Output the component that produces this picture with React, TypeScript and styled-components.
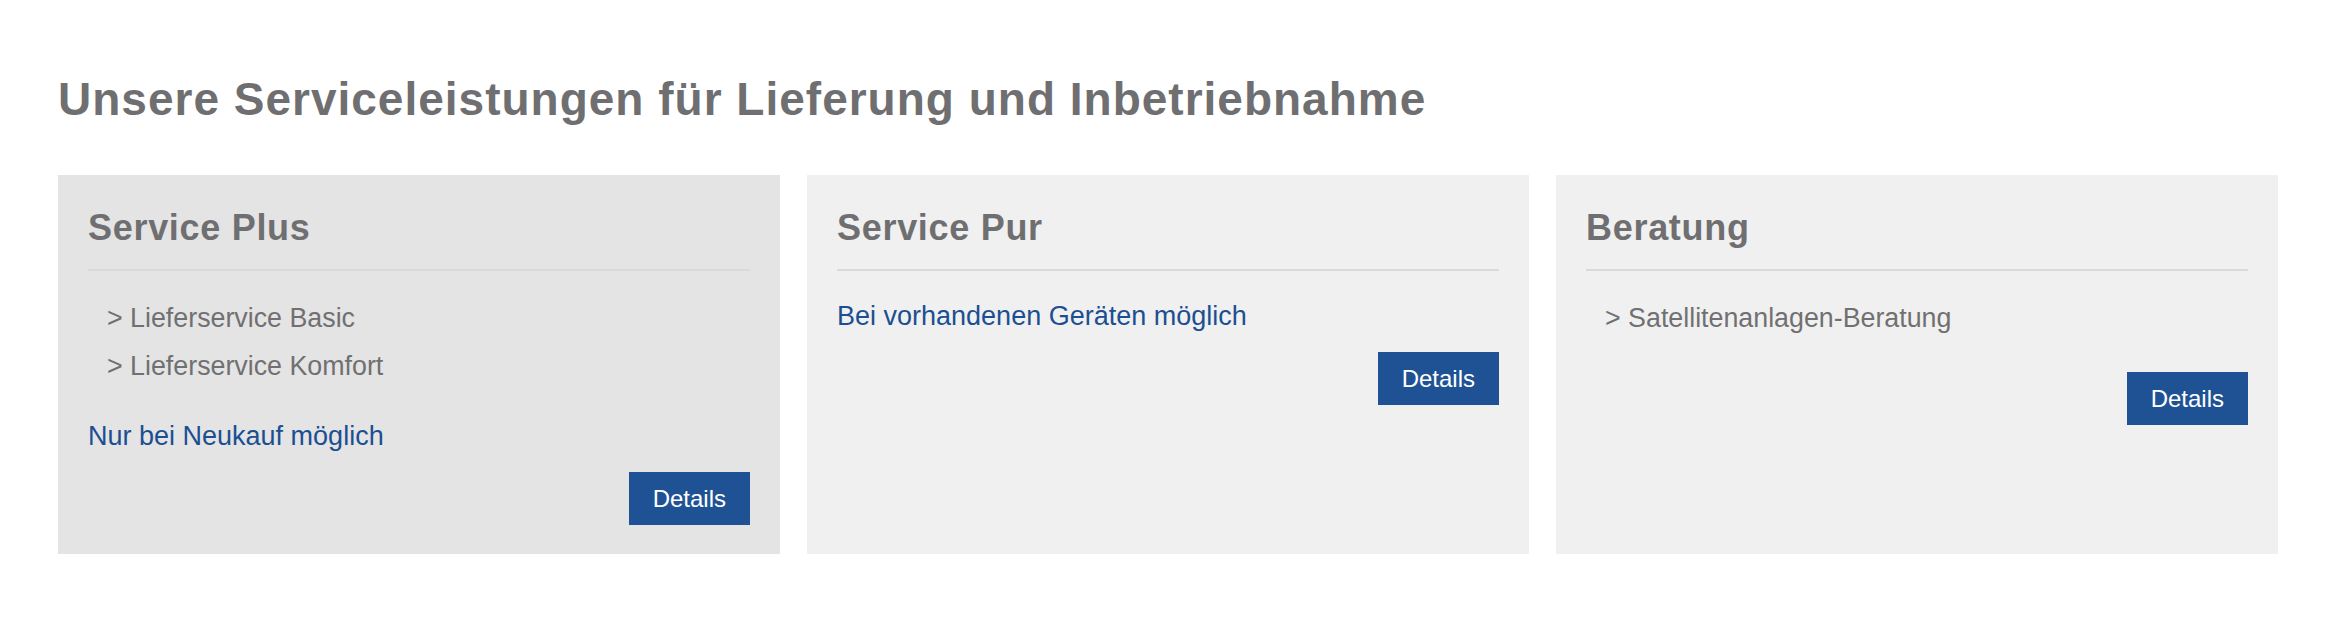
import React from 'react';
import styled, { createGlobalStyle } from 'styled-components';

const GlobalStyle = createGlobalStyle`
  html, body {
    margin: 0;
    padding: 0;
    background: #ffffff;
  }
  body {
    font-family: 'Liberation Sans', Arial, sans-serif;
  }
`;

const Page = styled.div`
  padding: 72px 47px 0 58px;
`;

const Title = styled.h2`
  margin: 0 0 49px;
  font-size: 46px;
  line-height: 54px;
  font-weight: bold;
  letter-spacing: 1px;
  color: #6f6f71;
`;

const Grid = styled.div`
  display: grid;
  grid-template-columns: repeat(3, 1fr);
  gap: 27px;
`;

const Card = styled.div<{ $active?: boolean }>`
  display: flex;
  flex-direction: column;
  padding: 31px 30px 29px;
  background-color: ${(p) => (p.$active ? '#e4e4e4' : '#f0f0f0')};
`;

const CardTitle = styled.h3`
  margin: 0 0 19px;
  font-size: 36px;
  line-height: 44px;
  font-weight: bold;
  letter-spacing: 0.7px;
  color: #6f6f71;
`;

const Divider = styled.hr`
  margin: 0 0 23px;
  border: none;
  height: 2px;
  background-color: #dadada;
`;

const List = styled.ul`
  margin: 0 0 24px;
  padding: 0 0 0 19px;
  list-style: none;

  li {
    font-size: 26.8px;
    line-height: 48px;
    color: #707072;
  }
`;

const Note = styled.p`
  margin: 0 0 13px;
  font-size: 27px;
  line-height: 45px;
  color: #1c4f92;
`;

const ButtonRow = styled.div`
  display: flex;
  justify-content: flex-end;

  ${List} + & {
    margin-top: 6px;
  }
`;

const DetailsButton = styled.button`
  height: 53px;
  padding: 0 24px;
  border: none;
  border-radius: 0;
  background-color: #1f5294;
  color: #ffffff;
  font-family: 'Liberation Sans', Arial, sans-serif;
  font-size: 24px;
  line-height: 53px;
  cursor: pointer;
`;

type Service = {
  title: string;
  items: string[];
  note?: string;
  active?: boolean;
};

const services: Service[] = [
  {
    title: 'Service Plus',
    items: ['Lieferservice Basic', 'Lieferservice Komfort'],
    note: 'Nur bei Neukauf möglich',
    active: true,
  },
  {
    title: 'Service Pur',
    items: [],
    note: 'Bei vorhandenen Geräten möglich',
  },
  {
    title: 'Beratung',
    items: ['Satellitenanlagen-Beratung'],
  },
];

const App = () => {
  return (
    <>
      <GlobalStyle />
      <Page>
        <Title>Unsere Serviceleistungen für Lieferung und Inbetriebnahme</Title>
        <Grid>
          {services.map((s) => (
            <Card key={s.title} $active={s.active}>
              <CardTitle>{s.title}</CardTitle>
              <Divider />
              {s.items.length > 0 && (
                <List>
                  {s.items.map((item) => (
                    <li key={item}>&gt; {item}</li>
                  ))}
                </List>
              )}
              {s.note && <Note>{s.note}</Note>}
              <ButtonRow>
                <DetailsButton>Details</DetailsButton>
              </ButtonRow>
            </Card>
          ))}
        </Grid>
      </Page>
    </>
  );
};

export default App;
